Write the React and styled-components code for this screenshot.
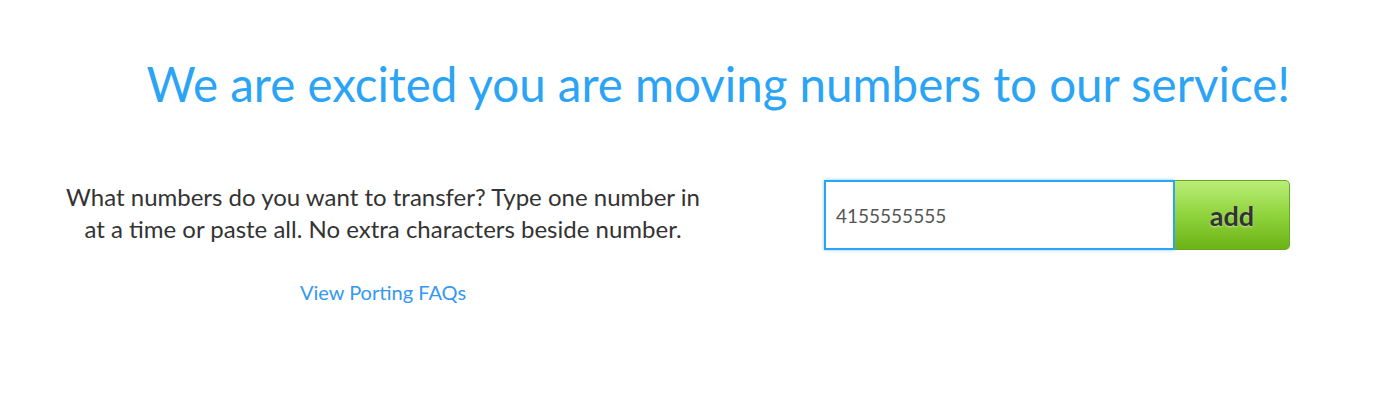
import React, { useState } from 'react';
import styled, { createGlobalStyle } from 'styled-components';

const GlobalStyle = createGlobalStyle`
  html, body {
    margin: 0;
    padding: 0;
    background: #ffffff;
    font-family: "Lato", "Open Sans", sans-serif;
  }
`;

const Page = styled.div`
  width: 1376px;
  height: 418px;
  box-sizing: border-box;
  padding: 52px 86px 0 64px;
`;

const Title = styled.h1`
  margin: 0 0 65px;
  font-family: "Lato", sans-serif;
  font-weight: 400;
  font-size: 47.5px;
  line-height: 64px;
  color: #2ba4f6;
  text-align: right;
`;

const Row = styled.div`
  display: flex;
  justify-content: space-between;
  align-items: flex-start;
`;

const InfoColumn = styled.div`
  width: 638px;
  display: flex;
  flex-direction: column;
  align-items: center;
  text-align: center;
`;

const Hint = styled.p`
  margin: 0;
  font-family: "Lato", sans-serif;
  font-size: 24px;
  line-height: 32px;
  color: #333;
  white-space: nowrap;
`;

const FaqLink = styled.a`
  margin-top: 35px;
  font-family: "Lato", sans-serif;
  font-size: 20px;
  color: #3598f2;
  text-decoration: none;
  cursor: pointer;
`;

const AddForm = styled.form`
  display: flex;
  margin-top: -1px;
`;

const NumberInput = styled.input`
  width: 351px;
  height: 70px;
  box-sizing: border-box;
  border: 2px solid #2ba4f6;
  box-shadow: 0 0 3px rgba(43, 164, 246, 0.6);
  padding: 0 10px;
  font-family: "Lato", sans-serif;
  font-size: 19px;
  color: #555;
  outline: none;
  caret-color: #333;
`;

const AddButton = styled.button`
  width: 115px;
  height: 70px;
  border: 1px solid #6aa91f;
  border-left: none;
  border-radius: 0 5px 5px 0;
  background: linear-gradient(to bottom, #b9ee78 0%, #90d33c 50%, #6cb316 100%);
  font-family: "Lato", sans-serif;
  font-weight: 700;
  font-size: 27px;
  color: #333;
  text-shadow: 0 1px 2px rgba(255, 255, 255, 0.5);
  cursor: pointer;
`;

export default function App() {
  const [value, setValue] = useState('4155555555');

  return (
    <>
      <GlobalStyle />
      <Page>
        <Title>We are excited you are moving numbers to our service!</Title>
        <Row>
          <InfoColumn>
            <Hint>
              What numbers do you want to transfer? Type one number in
              <br />
              at a time or paste all. No extra characters beside number.
            </Hint>
            <FaqLink>View Porting FAQs</FaqLink>
          </InfoColumn>
          <AddForm onSubmit={e => e.preventDefault()}>
            <NumberInput
              autoFocus
              value={value}
              onChange={e => setValue(e.target.value)}
            />
            <AddButton type="submit">add</AddButton>
          </AddForm>
        </Row>
      </Page>
    </>
  );
}
